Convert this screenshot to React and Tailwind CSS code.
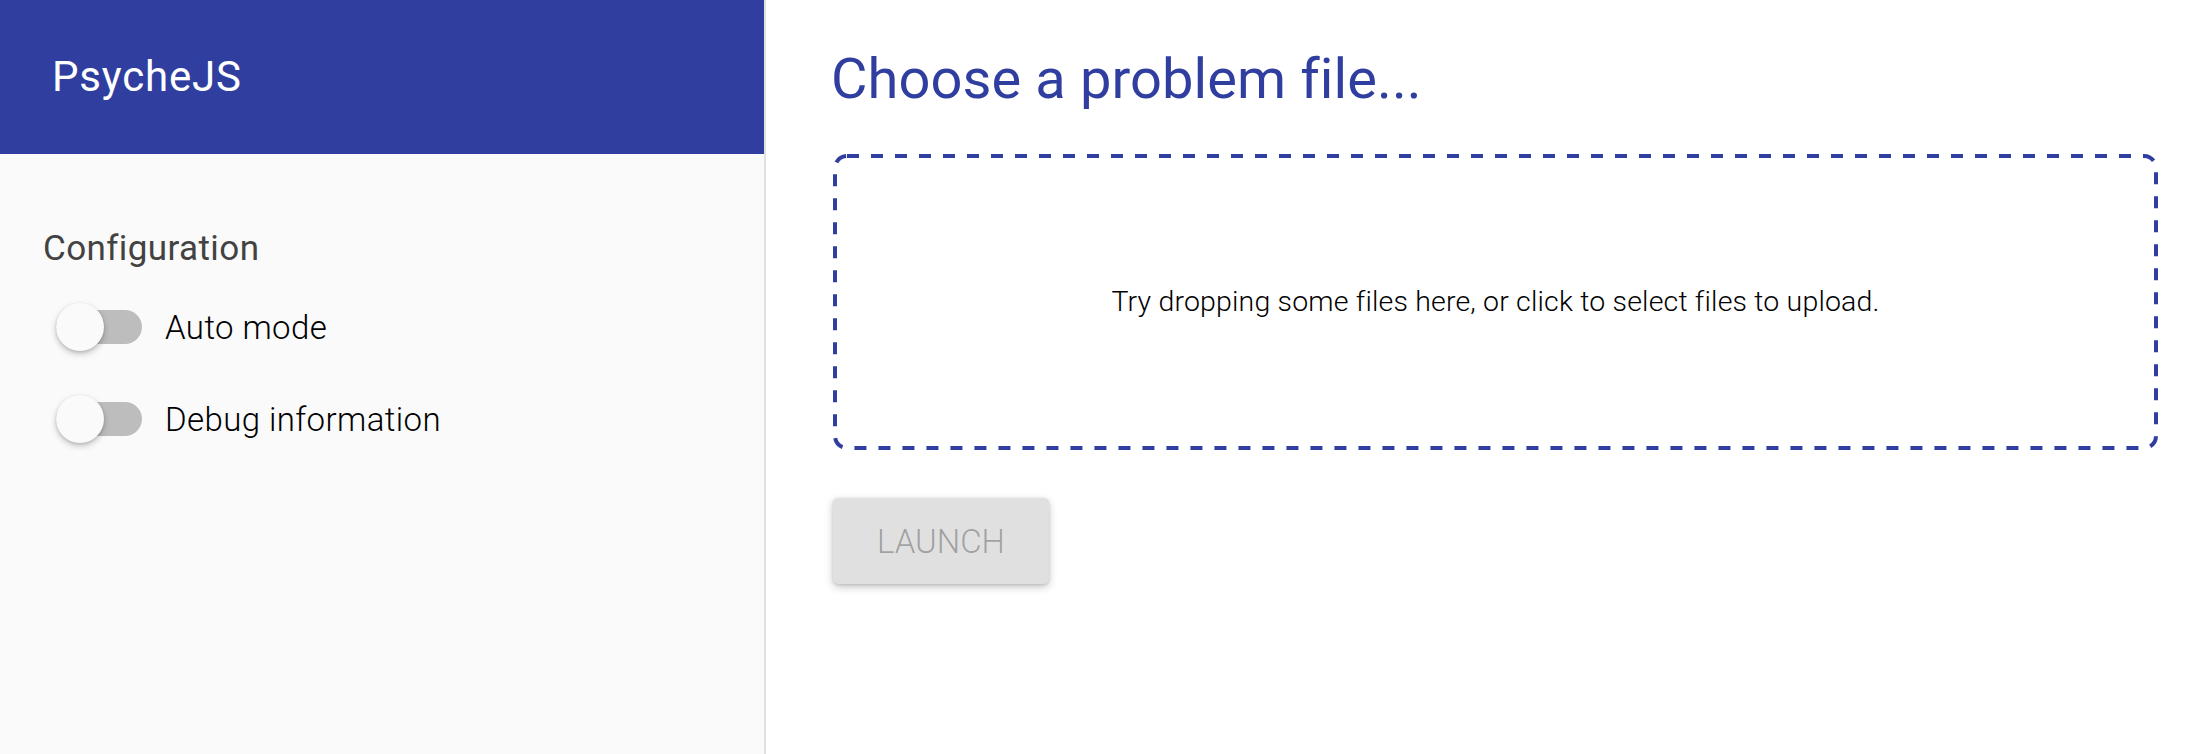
import React, { useState } from "react";

const font = { fontFamily: "Roboto, 'Liberation Sans', sans-serif" };

function Toggle({ label, on, onChange }) {
    return (
        <div className="flex items-center h-[48px] pl-[13px]">
            <button
                type="button"
                onClick={() => onChange(!on)}
                className="relative w-[86px] h-[48px] shrink-0"
            >
                {/* track */}
                <span
                    className={`absolute left-0 top-[7px] w-[86px] h-[34px] rounded-full ${on ? "bg-[#9fa8da]" : "bg-[#bdbdbd]"}`}
                />
                {/* thumb */}
                <span
                    className={`absolute top-0 w-[48px] h-[48px] rounded-full shadow-[0_3px_6px_rgba(0,0,0,0.22),0_1px_3px_rgba(0,0,0,0.12)] ${on ? "left-[38px] bg-[#303f9f]" : "left-0 bg-[#fafafa]"}`}
                />
            </button>
            <span className="ml-[23px] text-[33px] leading-none font-light tracking-[0.4px] text-black">
                {label}
            </span>
        </div>
    );
}

export default function App() {
    const [auto, setAuto] = useState(false);
    const [debug, setDebug] = useState(false);

    return (
        <div className="flex h-[754px] w-full overflow-hidden" style={font}>
            {/* sidebar */}
            <div className="w-[766px] shrink-0 bg-[#fafafa] border-r-2 border-[#e0e0e0] flex flex-col">
                <div className="h-[154px] bg-[#303f9f] flex items-center pl-[52px]">
                    <span className="text-white text-[42px] leading-none tracking-[0.8px]">
                        PsycheJS
                    </span>
                </div>
                <div className="pl-[43px]">
                    <h2 className="mt-[77px] text-[35px] leading-none tracking-[0.4px] text-[#424242]">
                        Configuration
                    </h2>
                    <div className="mt-[37px] flex flex-col gap-[44px]">
                        <Toggle label="Auto mode" on={auto} onChange={setAuto} />
                        <Toggle
                            label="Debug information"
                            on={debug}
                            onChange={setDebug}
                        />
                    </div>
                </div>
            </div>

            {/* main */}
            <div className="flex-1 bg-white pl-[67px] pr-[52px]">
                <h1 className="mt-[51px] text-[56px] leading-none tracking-[0.1px] text-[#303f9f] -ml-[2px]">
                    Choose a problem file...
                </h1>
                <div className="relative mt-[47px] h-[296px] flex items-center justify-center cursor-pointer">
                    {/* dashed outline of the drop zone */}
                    <svg
                        className="absolute inset-0 w-full h-full pointer-events-none"
                        preserveAspectRatio="none"
                    >
                        <rect
                            x="2"
                            y="2"
                            width="calc(100% - 4px)"
                            height="calc(100% - 4px)"
                            rx="12"
                            fill="none"
                            stroke="#303f9f"
                            strokeWidth="4"
                            strokeDasharray="12 12"
                        />
                    </svg>
                    <p className="text-[28.5px] leading-none font-light tracking-[0.17px] text-black">
                        Try dropping some files here, or click to select files
                        to upload.
                    </p>
                </div>
                <button
                    type="button"
                    disabled
                    className="mt-[48px] w-[216px] h-[86px] rounded-[5px] bg-[#e0e0e0] text-[33px] font-light leading-none text-[rgba(0,0,0,0.3)] shadow-[0_3px_8px_rgba(0,0,0,0.22),0_1px_3px_rgba(0,0,0,0.12)]"
                >
                    LAUNCH
                </button>
            </div>
        </div>
    );
}
